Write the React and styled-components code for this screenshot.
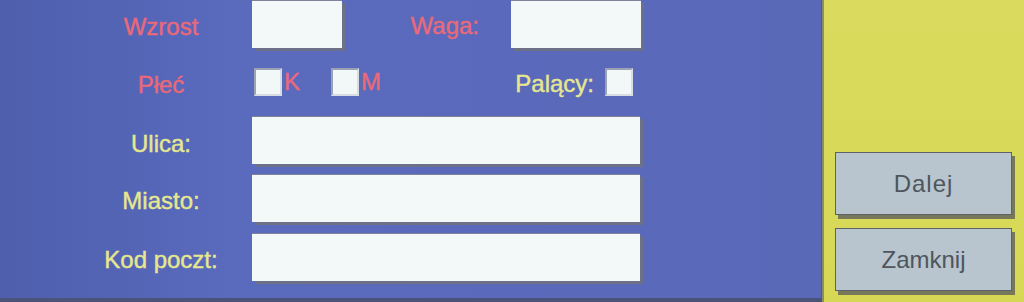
import styled, { createGlobalStyle } from "styled-components";

const GlobalStyle = createGlobalStyle`
  html, body {
    margin: 0;
    padding: 0;
    overflow: hidden;
  }
  body {
    font-family: "Liberation Sans", Arial, sans-serif;
  }
`;

const Screen = styled.div`
  display: flex;
  width: 1024px;
  height: 302px;
  overflow: hidden;
`;

const FormPanel = styled.div`
  width: 822px;
  box-sizing: border-box;
  height: 302px;
  padding: 0 0 0 70px;
  background: linear-gradient(90deg, #4f5fae 0%, #5a6abd 30%, #5a68b8 100%);
  border-bottom: 4px solid #4b5378;
  border-right: 1px solid #4e5a98;
  display: flex;
  flex-direction: column;
`;

const Row = styled.div`
  display: flex;
  align-items: center;
  width: 571px;
  height: ${(p) => p.h}px;
  margin-bottom: ${(p) => p.mb || 0}px;
`;

const Label = styled.div`
  width: 182px;
  flex-shrink: 0;
  text-align: center;
  font-size: 24px;
  line-height: 28px;
  padding-top: ${(p) => p.pt ?? 6}px;
  color: ${(p) => (p.red ? "#e9697a" : "#e6e78f")};
  -webkit-text-stroke: 0.4px currentColor;
`;

const SideLabel = styled.div`
  font-size: 24px;
  line-height: 28px;
  padding-top: 4px;
  margin-left: auto;
  margin-right: ${(p) => p.mr}px;
  color: ${(p) => (p.red ? "#e9697a" : "#e6e78f")};
  -webkit-text-stroke: 0.4px currentColor;
`;

const Field = styled.div`
  width: ${(p) => p.w}px;
  height: 47px;
  flex-shrink: 0;
  background: #f3f8f9;
  border-top: 1px solid #7d8498;
  box-shadow: 3px 3px 0 #6c7187;
`;

const Check = styled.div`
  width: 24px;
  height: 24px;
  flex-shrink: 0;
  background: #f2f7f8;
  border: 2px solid #9aa2b4;
  border-right-color: #d8dde4;
  border-bottom-color: #d8dde4;
`;

const CheckText = styled.span`
  font-size: 24px;
  line-height: 28px;
  color: #e9697a;
  -webkit-text-stroke: 0.4px currentColor;
  margin-left: 2px;
  margin-right: ${(p) => p.mr || 0}px;
`;

const CheckGroup = styled.div`
  display: flex;
  align-items: flex-start;
  margin-left: 2px;
`;

const Tail = styled.div`
  display: flex;
  align-items: center;
  margin-left: auto;
  margin-right: 8px;
`;

const SidePanel = styled.div`
  flex: 1;
  background: linear-gradient(180deg, #dadb5e 0%, #d6d855 100%);
  box-shadow: inset 2px 0 0 #8c8c6a;
  display: flex;
  flex-direction: column;
  justify-content: flex-end;
  padding: 0 12px 11px 13px;
  gap: 13px;
`;

const Button = styled.button`
  width: 177px;
  height: 63px;
  background: #b8c5ce;
  border: 1px solid #5d6268;
  box-shadow: 3px 4px 0 #77775a;
  font-family: "Liberation Sans", Arial, sans-serif;
  font-size: 24px;
  color: #4f555c;
  letter-spacing: ${(p) => p.ls || 0}px;
  padding: 0;
`;

export default function App() {
  return (
    <>
      <GlobalStyle />
      <Screen>
        <FormPanel>
          <Row h={48} mb={20}>
            <Label red>Wzrost</Label>
            <Field w={90} />
            <SideLabel red mr={32}>Waga:</SideLabel>
            <Field w={130} />
          </Row>
          <Row h={28} mb={20}>
            <Label red>Płeć</Label>
            <CheckGroup>
              <Check />
              <CheckText mr={31}>K</CheckText>
              <Check />
              <CheckText>M</CheckText>
            </CheckGroup>
            <Tail>
              <SideLabel mr={11}>Palący:</SideLabel>
              <Check />
            </Tail>
          </Row>
          <Row h={48} mb={10}>
            <Label pt={8}>Ulica:</Label>
            <Field w={388} />
          </Row>
          <Row h={48} mb={10}>
            <Label>Miasto:</Label>
            <Field w={388} />
          </Row>
          <Row h={49}>
            <Label>Kod poczt:</Label>
            <Field w={388} />
          </Row>
        </FormPanel>
        <SidePanel>
          <Button ls={1}>Dalej</Button>
          <Button>Zamknij</Button>
        </SidePanel>
      </Screen>
    </>
  );
}
